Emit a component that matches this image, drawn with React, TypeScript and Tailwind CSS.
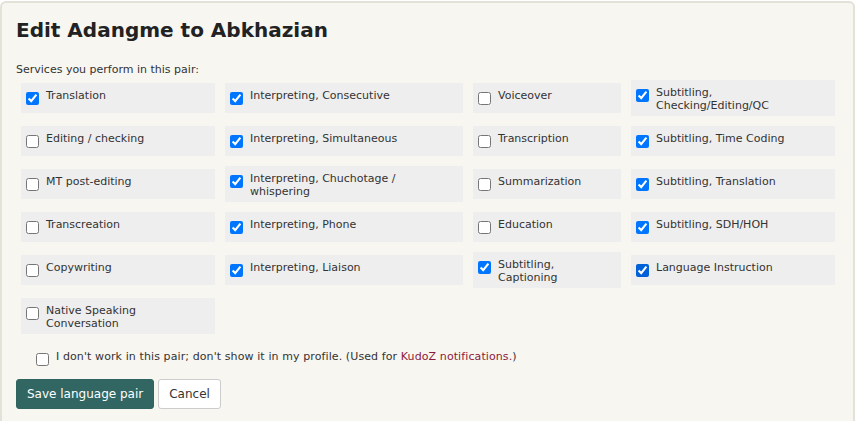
import React from "react";

type Item = { label: React.ReactNode; checked: boolean; dark?: boolean };

const items: Item[] = [
  { label: "Translation", checked: true },
  { label: "Interpreting, Consecutive", checked: true },
  { label: "Voiceover", checked: false },
  { label: <>Subtitling,<br />Checking/Editing/QC</>, checked: true },
  { label: "Editing / checking", checked: false },
  { label: "Interpreting, Simultaneous", checked: true },
  { label: "Transcription", checked: false },
  { label: "Subtitling, Time Coding", checked: true },
  { label: "MT post-editing", checked: false },
  { label: <>Interpreting, Chuchotage /<br />whispering</>, checked: true },
  { label: "Summarization", checked: false },
  { label: "Subtitling, Translation", checked: true },
  { label: "Transcreation", checked: false },
  { label: "Interpreting, Phone", checked: true },
  { label: "Education", checked: false },
  { label: "Subtitling, SDH/HOH", checked: true },
  { label: "Copywriting", checked: false },
  { label: "Interpreting, Liaison", checked: true },
  { label: <>Subtitling,<br />Captioning</>, checked: true },
  { label: "Language Instruction", checked: true, dark: true },
  { label: <>Native Speaking<br />Conversation</>, checked: false },
];

export default function App() {
  return (
    <div className="h-[421px] w-[859px] overflow-hidden bg-white font-['DejaVu_Sans',Verdana,sans-serif]">
      <div className="mt-[1px] mr-[4px] rounded-[6px] border-2 border-[#e3e1d8] bg-[#f7f6f1] px-[14px] pt-[15px] pb-[40px]">
        <h1 className="text-[20px] font-bold leading-[24px] text-[#222222]">
          Edit Adangme to Abkhazian
        </h1>
        <p className="mt-[21px] text-[11px] leading-[13px] text-[#333333]">
          Services you perform in this pair:
        </p>
        <div className="ml-[5px] mt-[4px] grid grid-cols-[194px_238px_148px_204px] items-center gap-x-[10px] gap-y-[10px]">
          {items.map((it, i) => (
            <label
              key={i}
              className="flex min-h-[30px] items-start bg-[#eeeeee] px-[5px] pt-[6px] pb-[4px]"
            >
              <input
                type="checkbox"
                defaultChecked={it.checked}
                className={
                  "m-0 mt-[3px] h-[13px] w-[13px] shrink-0" +
                  (it.dark ? " accent-[#0062d6]" : "")
                }
              />
              <span className="ml-[7px] text-[11px] leading-[13px] text-[#333333]">
                {it.label}
              </span>
            </label>
          ))}
        </div>
        <label className="ml-[20px] mt-[16px] flex items-start">
          <input type="checkbox" className="m-0 mt-[3px] h-[13px] w-[13px] shrink-0" />
          <span className="ml-[7px] text-[11px] leading-[13px] tracking-[0.1px] text-[#333333]">
            I don't work in this pair; don't show it in my profile. (Used for{" "}
            <span className="text-[#8b1a3c]">KudoZ notifications.</span>)
          </span>
        </label>
        <div className="mt-[13px] flex gap-[4px]">
          <button className="h-[30px] rounded-[3px] border border-[#2f6461] bg-[#316663] px-[10px] text-[12px] leading-[28px] text-white">
            Save language pair
          </button>
          <button className="h-[30px] rounded-[3px] border border-[#cccccc] bg-white px-[10px] text-[12px] leading-[28px] text-[#333333]">
            Cancel
          </button>
        </div>
      </div>
    </div>
  );
}
